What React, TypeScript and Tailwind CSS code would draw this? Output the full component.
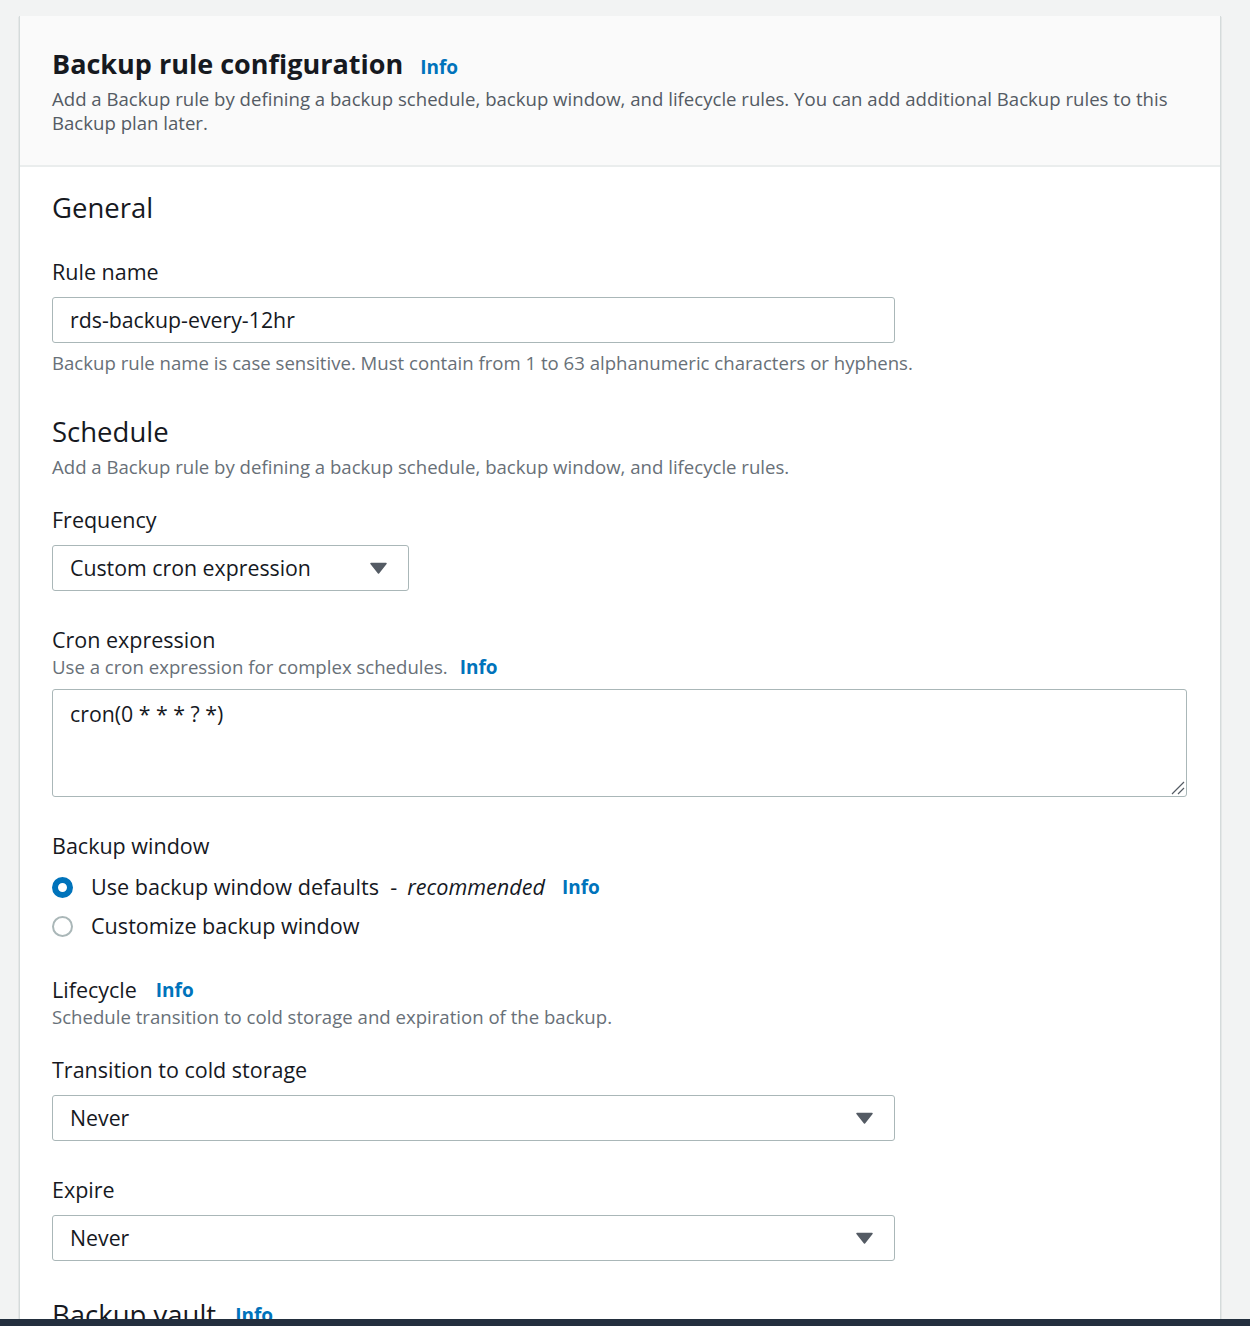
import { useState } from 'react'

const font = { fontFamily: '"Open Sans", "Noto Sans", sans-serif' }

function InfoLink({ className = '' }: { className?: string }) {
  return <a className={`font-bold text-[#0073bb] text-[19px] leading-[24px] ${className}`}>Info</a>
}

function Caret() {
  return (
    <svg width="17" height="12" viewBox="0 0 17 12" className="shrink-0">
      <path d="M1 1.5 L16 1.5 L8.5 11 Z" fill="#545b64" stroke="#545b64" strokeWidth="1.5" strokeLinejoin="round" />
    </svg>
  )
}

function Select({ value, width }: { value: string; width: string }) {
  return (
    <div className={`${width} h-[46px] border border-[#aab7b8] rounded-[3px] bg-white flex items-center justify-between pl-[17px] pr-[21px]`}>
      <span className="text-[21.3px] text-[#16191f]">{value}</span>
      <Caret />
    </div>
  )
}

function Label({ children, className = '' }: { children: React.ReactNode; className?: string }) {
  return <div className={`text-[21.5px] leading-[30px] text-[#16191f] ${className}`}>{children}</div>
}

function Hint({ children, className = '' }: { children: React.ReactNode; className?: string }) {
  return <div className={`text-[18.6px] leading-[24px] text-[#687078] ${className}`}>{children}</div>
}

function Radio({ checked, children, className = '' }: { checked: boolean; children: React.ReactNode; className?: string }) {
  return (
    <div className={`flex items-center h-[30px] ${className}`}>
      {checked ? (
        <span className="w-[21px] h-[21px] rounded-full border-[6px] border-[#0073bb] bg-white shrink-0" />
      ) : (
        <span className="w-[21px] h-[21px] rounded-full border-2 border-[#aab7b8] bg-white shrink-0" />
      )}
      <span className="ml-[18px] text-[21.6px] text-[#16191f] flex items-center whitespace-pre">{children}</span>
    </div>
  )
}

export default function App() {
  const [ruleName] = useState('rds-backup-every-12hr')

  return (
    <div className="h-[1326px] overflow-hidden bg-[#f2f3f3] relative" style={font}>
      <div className="ml-[19px] mt-[16px] w-[1202px] border-x border-[#d5dbdb] bg-white shadow-[0_1px_1px_0_rgba(0,28,36,0.3)]">
        <div className="bg-[#fafafa] border-b-2 border-[#eaeded] px-[32px] pt-[30px] pb-[30px]">
          <div className="flex items-baseline">
            <h2 className="text-[27px] leading-[36px] font-bold text-[#16191f]">Backup rule configuration</h2>
            <InfoLink className="ml-[17px]" />
          </div>
          <p className="mt-[5px] text-[18.6px] leading-[24px] text-[#545b64]">
            <span className="whitespace-nowrap">
              Add a Backup rule by defining a backup schedule, backup window, and lifecycle rules. You can add additional Backup rules to this
            </span>
            <br />
            Backup plan later.
          </p>
        </div>

        <div className="px-[32px] pt-[25px] pb-[40px]">
          <h3 className="text-[27.5px] leading-[32px] text-[#16191f]">General</h3>

          <Label className="mt-[33px]">Rule name</Label>
          <div className="mt-[10px] w-[843px] h-[46px] border border-[#aab7b8] rounded-[3px] bg-white flex items-center pl-[17px]">
            <span className="text-[21.3px] text-[#16191f]">{ruleName}</span>
          </div>
          <Hint className="mt-[8px]">Backup rule name is case sensitive. Must contain from 1 to 63 alphanumeric characters or hyphens.</Hint>

          <h3 className="mt-[41px] text-[27.5px] leading-[32px] text-[#16191f]">Schedule</h3>
          <Hint className="mt-[7px] text-[#545b64]">Add a Backup rule by defining a backup schedule, backup window, and lifecycle rules.</Hint>

          <Label className="mt-[26px]">Frequency</Label>
          <div className="mt-[10px]">
            <Select value="Custom cron expression" width="w-[357px]" />
          </div>

          <Label className="mt-[34px]">Cron expression</Label>
          <div className="flex items-center">
            <Hint>Use a cron expression for complex schedules.</Hint>
            <InfoLink className="ml-[12px]" />
          </div>
          <div className="mt-[10px] w-[1135px] h-[108px] border border-[#aab7b8] rounded-[3px] bg-white relative pl-[17px] pt-[8px]">
            <span className="text-[21.3px] text-[#16191f]">cron(0 * * * ? *)</span>
            <svg width="14" height="14" viewBox="0 0 14 14" className="absolute right-[1px] bottom-[1px]">
              <path d="M1 13 L13 1 M7 13 L13 7" stroke="#545b64" strokeWidth="1.2" />
            </svg>
          </div>

          <Label className="mt-[34px]">Backup window</Label>
          <Radio checked className="mt-[11px]">
            {'Use backup window defaults  -'}
            <em className="ml-[10px]">recommended</em>
            <InfoLink className="ml-[17px]" />
          </Radio>
          <Radio checked={false} className="mt-[9px]">Customize backup window</Radio>

          <div className="mt-[34px] flex items-center">
            <Label>Lifecycle</Label>
            <InfoLink className="ml-[19px]" />
          </div>
          <Hint>Schedule transition to cold storage and expiration of the backup.</Hint>

          <Label className="mt-[26px]">Transition to cold storage</Label>
          <div className="mt-[10px]">
            <Select value="Never" width="w-[843px]" />
          </div>

          <Label className="mt-[34px]">Expire</Label>
          <div className="mt-[10px]">
            <Select value="Never" width="w-[843px]" />
          </div>

          <div className="mt-[38px] flex items-center">
            <h3 className="text-[27.5px] leading-[32px] text-[#16191f]">Backup vault</h3>
            <InfoLink className="ml-[19px]" />
          </div>
        </div>
      </div>
      <div className="absolute left-0 right-0 bottom-0 h-[7px] bg-[#232f3e]" />
    </div>
  )
}
